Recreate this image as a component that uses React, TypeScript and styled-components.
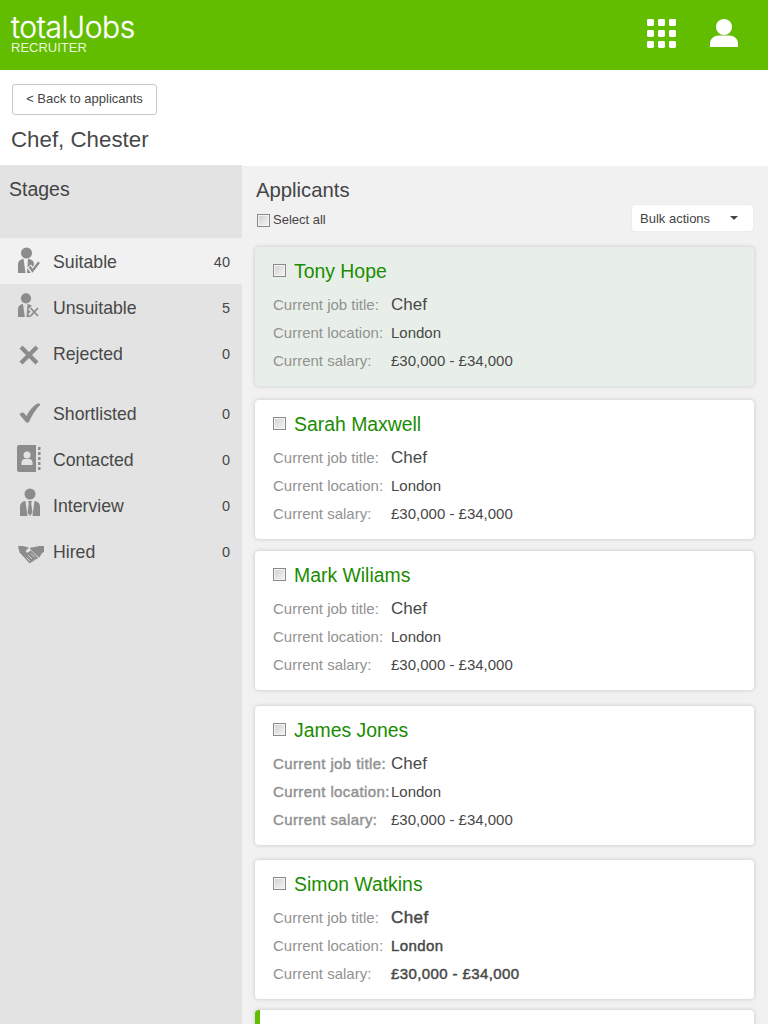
import React from "react";
import styled, { createGlobalStyle, css } from "styled-components";

const Global = createGlobalStyle`
  html, body { margin: 0; padding: 0; height: 1024px; overflow: hidden; background: #fff; }
  * { box-sizing: border-box; }
  body { font-family: "Liberation Sans", Arial, sans-serif; color: #444; }
`;

const Page = styled.div`
  width: 768px;
  height: 1024px;
  overflow: hidden;
  display: flex;
  flex-direction: column;
`;

const TopBar = styled.header`
  height: 70px;
  flex: none;
  background: #62bd00;
  display: flex;
  align-items: flex-start;
  justify-content: space-between;
  padding: 0 30px 0 11px;
  color: #fff;
`;

const Logo = styled.div`
  display: flex;
  flex-direction: column;
  padding-top: 15px;
`;

const LogoWord = styled.span`
  font-family: "Inter", sans-serif;
  font-weight: 300;
  font-size: 30px;
  line-height: 24px;
  letter-spacing: -0.4px;
  -webkit-text-stroke: 0.3px #fff;
`;

const LogoSub = styled.span`
  font-size: 13px;
  line-height: 13px;
  margin-top: 2px;
  color: #e9f7d8;
`;

const TopIcons = styled.div`
  display: flex;
  align-items: center;
  gap: 34px;
  height: 66px;
`;

const SubHeader = styled.div`
  height: 95px;
  flex: none;
  padding: 14px 12px 0 11px;
  background: #fff;
`;

const BackButton = styled.button`
  display: block;
  width: 145px;
  height: 31px;
  margin-left: 1px;
  padding: 0 0 2px;
  background: #fff;
  border: 1px solid #c8c8c8;
  border-radius: 3px;
  font: 13px "Liberation Sans", Arial, sans-serif;
  color: #444;
`;

const JobTitle = styled.h1`
  margin: 11px 0 0;
  font-size: 22.3px;
  line-height: 28px;
  font-weight: 400;
  color: #484848;
`;

const Body = styled.div`
  flex: 1;
  display: flex;
  min-height: 0;
  background: #f1f1f1;
`;

const Sidebar = styled.aside`
  width: 242px;
  flex: none;
  background: #e3e3e3;
`;

const SideTitle = styled.h2`
  margin: 0;
  height: 73px;
  padding: 12px 0 0 9px;
  font-size: 19.5px;
  line-height: 24px;
  font-weight: 400;
  color: #444;
`;

const StageList = styled.div<{ $mt?: number }>`
  display: flex;
  flex-direction: column;
  margin-top: ${(p) => p.$mt ?? 0}px;
`;

const StageRow = styled.div<{ $active?: boolean }>`
  height: 46px;
  display: grid;
  grid-template-columns: 53px 1fr auto;
  align-items: center;
  padding-right: 12px;
  background: ${(p) => (p.$active ? "#f1f1f1" : "transparent")};
`;

const StageIcon = styled.div`
  position: relative;
  width: 53px;
  height: 46px;
  svg { position: absolute; display: block; }
`;

const StageName = styled.span`
  font-size: 17.7px;
  padding-top: 2px;
  color: #484848;
`;

const StageCount = styled.span`
  font-size: 14.5px;
  padding-top: 2px;
  color: #484848;
`;

const Main = styled.main`
  flex: 1;
  min-width: 0;
  border-top: 1px solid #fff;
  padding: 12px 14px 0 13px;
`;

const MainTitle = styled.h2`
  margin: 0 0 0 1px;
  font-size: 20.3px;
  line-height: 24px;
  font-weight: 400;
  color: #444;
`;

const Toolbar = styled.div`
  display: flex;
  justify-content: space-between;
  align-items: flex-start;
  height: 45px;
`;

const SelectAll = styled.label`
  display: flex;
  align-items: center;
  gap: 3px;
  margin: 10px 0 0 2px;
  font-size: 13px;
  line-height: 16px;
  color: #444;
`;

const Check = styled.span`
  width: 13px;
  height: 13px;
  flex: none;
  display: block;
  border: 1px solid #8a8a8a;
  box-shadow: inset 0 0 0 1px #f4f4f4;
  background: linear-gradient(135deg, #cfcfcf, #f6f6f6);
`;

const BulkSelect = styled.div`
  width: 123px;
  height: 28px;
  margin-top: 2px;
  background: #fff;
  border: 1px solid #ececec;
  border-radius: 4px;
  display: flex;
  align-items: center;
  justify-content: space-between;
  padding: 0 15px 0 8px;
  font-size: 13px;
  color: #444;
`;

const Caret = styled.span`
  width: 0;
  height: 0;
  border-left: 4px solid transparent;
  border-right: 4px solid transparent;
  border-top: 4px solid #444;
`;

const CardList = styled.div`
  display: flex;
  flex-direction: column;
`;

const Card = styled.article<{ $selected?: boolean; $gap: number; $flag?: boolean }>`
  height: 139px;
  flex: none;
  margin-bottom: ${(p) => p.$gap}px;
  padding: 12px 18px 0 18px;
  background: ${(p) => (p.$selected ? "#e8efe8" : "#fff")};
  border-radius: 4px;
  box-shadow: 0 0 4px rgba(0, 0, 0, 0.18);
  ${(p) => (p.$flag ? "border-left: 5px solid #62bd00; padding-left: 13px;" : "")}
`;

const NameRow = styled.div`
  display: flex;
  align-items: center;
  gap: 8px;
  height: 25px;
  margin-bottom: 6px;
`;

const CardCheck = styled(Check)`
  margin-top: -3px;
`;

const Name = styled.a`
  font-size: 19.4px;
  line-height: 25px;
  color: #1a8c00;
`;

const Fields = styled.dl`
  margin: 0;
  display: grid;
  grid-template-columns: 118px 1fr;
  grid-auto-rows: 28px;
  align-items: center;
`;

const fauxBold = css<{ $bold?: boolean }>`
  ${(p) =>
    p.$bold
      ? `letter-spacing: 0.4px; -webkit-text-stroke: 0.45px currentColor;`
      : ""}
`;

const Label = styled.dt<{ $bold?: boolean }>`
  font-size: 15px;
  color: #929292;
  white-space: nowrap;
  ${fauxBold}
`;

const Value = styled.dd<{ $bold?: boolean; $big?: boolean }>`
  margin: 0;
  font-size: ${(p) => (p.$big ? 17 : 15)}px;
  padding-top: ${(p) => (p.$big ? 2 : 0)}px;
  color: #484848;
  ${fauxBold}
`;

const GRAY = "#8c8c8c";

const GridIcon = () => (
  <svg width="29" height="29" viewBox="0 0 29 29" fill="#fff" aria-hidden>
    {[0, 11, 22].flatMap((y) =>
      [0, 11, 22].map((x) => <rect key={`${x}-${y}`} x={x} y={y} width="7" height="7" rx="1.4" />)
    )}
  </svg>
);

const UserIcon = () => (
  <svg width="28" height="28" viewBox="0 0 28 28" fill="#fff" aria-hidden>
    <circle cx="14" cy="8" r="8" />
    <path d="M0 28v-3c0-5.500 4-8.500 9-8.500h10c5 0 9 3 9 8.500v3z" />
  </svg>
);

const SuitableIcon = () => (
  <svg style={{ left: 18, top: 9 }} width="23" height="27" viewBox="0 0 23 27" fill={GRAY} aria-hidden>
    <circle cx="8.500" cy="6" r="5.500" />
    <path d="M0 26v-8.500c0-3.500 2-5.200 5.500-5.800L7.500 26z" />
    <path d="M10 11.700c3.500.5 6 2.300 6 5.800V26H9z" />
    <path d="M11 19l3.500 5 7-9" fill="none" stroke="#f1f1f1" strokeWidth="5" />
    <path d="M11.500 19.500l3 4.300 6.500-8.500" fill="none" stroke={GRAY} strokeWidth="2.400" />
  </svg>
);

const UnsuitableIcon = () => (
  <svg style={{ left: 18, top: 9 }} width="22" height="25" viewBox="0 0 22 25" fill={GRAY} aria-hidden>
    <circle cx="8" cy="5.300" r="5.100" />
    <path d="M0 24v-7.500c0-3.500 1.800-5 5-5.500l1.800 13z" />
    <path d="M9.500 11c3 .4 5 1.700 5.500 4.500V24H8.500z" />
    <path d="M12 14.500l8 8.500M20 14.500l-8 8.500" fill="none" stroke="#e3e3e3" strokeWidth="5" />
    <path d="M12.500 15l7.500 8M20 15l-7.500 8" fill="none" stroke={GRAY} strokeWidth="1.800" />
  </svg>
);

const CrossIcon = () => (
  <svg style={{ left: 19, top: 15 }} width="20" height="20" viewBox="0 0 20 20" fill={GRAY} aria-hidden>
    <path d="M3.500.5 10 7 16.500.5l3 3L13 10l6.500 6.500-3 3L10 13l-6.500 6.500-3-3L7 10 .5 3.500z" />
  </svg>
);

const TickIcon = () => (
  <svg style={{ left: 19, top: 13 }} width="22" height="20" viewBox="0 0 22 20" fill={GRAY} aria-hidden>
    <path d="M.5 11.500c1-1.500 2.300-2 3.300-2 .7 0 2.700 2.200 3.700 3.500C10 8 14 3 18.500.5c1-.5 3 .5 2.500 1.500C16.500 6.500 12.500 13 10 19c-.3.700-2.500.700-3.200 0z" />
  </svg>
);

const BookIcon = () => (
  <svg style={{ left: 17, top: 9 }} width="24" height="27" viewBox="0 0 24 27" aria-hidden>
    <path fill={GRAY} d="M2 0h17v27H2a2 2 0 0 1-2-2V2a2 2 0 0 1 2-2z" />
    <circle cx="10" cy="10" r="3.500" fill="#e3e3e3" />
    <path fill="#e3e3e3" d="M4.500 20v-2.500c0-2.500 2-3.500 3.500-3.500h4c1.500 0 3.500 1 3.500 3.500V20z" />
    {[2, 7, 12, 17, 22].map((y) => (
      <rect key={y} x="21" y={y} width="2.500" height="3" fill={GRAY} />
    ))}
  </svg>
);

const InterviewIcon = () => (
  <svg style={{ left: 20, top: 6 }} width="20" height="29" viewBox="0 0 20 29" fill={GRAY} aria-hidden>
    <circle cx="10" cy="6" r="5.500" />
    <path d="M0 28v-9c0-4 2.500-5.500 5.500-6l2 15z" />
    <path d="M20 28v-9c0-4-2.500-5.500-5.500-6l-2 15z" />
    <path d="M8 13h4l-.8 2.500 1.300 9-2.500 3.500-2.500-3.500 1.300-9z" />
  </svg>
);

const HandshakeIcon = () => (
  <svg style={{ left: 18, top: 16 }} width="26" height="21" viewBox="0 0 26 21" fill={GRAY} aria-hidden>
    <path d="M0 2h4.500L11 3.500 8 6.500c-.8 1 .2 2.500 1.800 2l3.200-2 7 7.500-1.500 1.500-1-.5-1 1.800-1.300-.4-.7 1.700-1.300-.2-1 1.600-1.200-.8-7.500-8.200L1.500 8.500z" />
    <path d="M26 2h-4.500L15 3.300l-2.300.2-1 .9 4.800 5 4.700 4.400 2.800-4.800L26 8z" />
    <path d="M10.500 11.500l3.500 3.500M8.500 13.500l3.500 3.500M13 9.500l3.500 3.500" fill="none" stroke="#e3e3e3" strokeWidth=".8" />
  </svg>
);

const stages = [
  { name: "Suitable", count: 40, icon: <SuitableIcon />, active: true },
  { name: "Unsuitable", count: 5, icon: <UnsuitableIcon /> },
  { name: "Rejected", count: 0, icon: <CrossIcon /> },
];
const laterStages = [
  { name: "Shortlisted", count: 0, icon: <TickIcon /> },
  { name: "Contacted", count: 0, icon: <BookIcon /> },
  { name: "Interview", count: 0, icon: <InterviewIcon /> },
  { name: "Hired", count: 0, icon: <HandshakeIcon /> },
];

type Applicant = { name: string; gap: number; selected?: boolean; boldLabels?: boolean; boldValues?: boolean };
const applicants: Applicant[] = [
  { name: "Tony Hope", gap: 14, selected: true },
  { name: "Sarah Maxwell", gap: 12 },
  { name: "Mark Wiliams", gap: 16 },
  { name: "James Jones", gap: 15, boldLabels: true },
  { name: "Simon Watkins", gap: 11, boldValues: true },
];

const Stage = ({ s }: { s: { name: string; count: number; icon: React.ReactNode; active?: boolean } }) => (
  <StageRow $active={s.active}>
    <StageIcon>{s.icon}</StageIcon>
    <StageName>{s.name}</StageName>
    <StageCount>{s.count}</StageCount>
  </StageRow>
);

export default function App() {
  return (
    <Page>
      <Global />
      <TopBar>
        <Logo>
          <LogoWord>totalJobs</LogoWord>
          <LogoSub>RECRUITER</LogoSub>
        </Logo>
        <TopIcons>
          <GridIcon />
          <UserIcon />
        </TopIcons>
      </TopBar>
      <SubHeader>
        <BackButton>&lt; Back to applicants</BackButton>
        <JobTitle>Chef, Chester</JobTitle>
      </SubHeader>
      <Body>
        <Sidebar>
          <SideTitle>Stages</SideTitle>
          <StageList>
            {stages.map((s) => (
              <Stage key={s.name} s={s} />
            ))}
          </StageList>
          <StageList $mt={14}>
            {laterStages.map((s) => (
              <Stage key={s.name} s={s} />
            ))}
          </StageList>
        </Sidebar>
        <Main>
          <MainTitle>Applicants</MainTitle>
          <Toolbar>
            <SelectAll>
              <Check />
              Select all
            </SelectAll>
            <BulkSelect>
              Bulk actions
              <Caret />
            </BulkSelect>
          </Toolbar>
          <CardList>
            {applicants.map((a) => (
              <Card key={a.name} $selected={a.selected} $gap={a.gap}>
                <NameRow>
                  <CardCheck />
                  <Name>{a.name}</Name>
                </NameRow>
                <Fields>
                  <Label $bold={a.boldLabels}>Current job title:</Label>
                  <Value $big $bold={a.boldValues}>Chef</Value>
                  <Label $bold={a.boldLabels}>Current location:</Label>
                  <Value $bold={a.boldValues}>London</Value>
                  <Label $bold={a.boldLabels}>Current salary:</Label>
                  <Value $bold={a.boldValues}>£30,000 - £34,000</Value>
                </Fields>
              </Card>
            ))}
            <Card $gap={0} $flag />
          </CardList>
        </Main>
      </Body>
    </Page>
  );
}
